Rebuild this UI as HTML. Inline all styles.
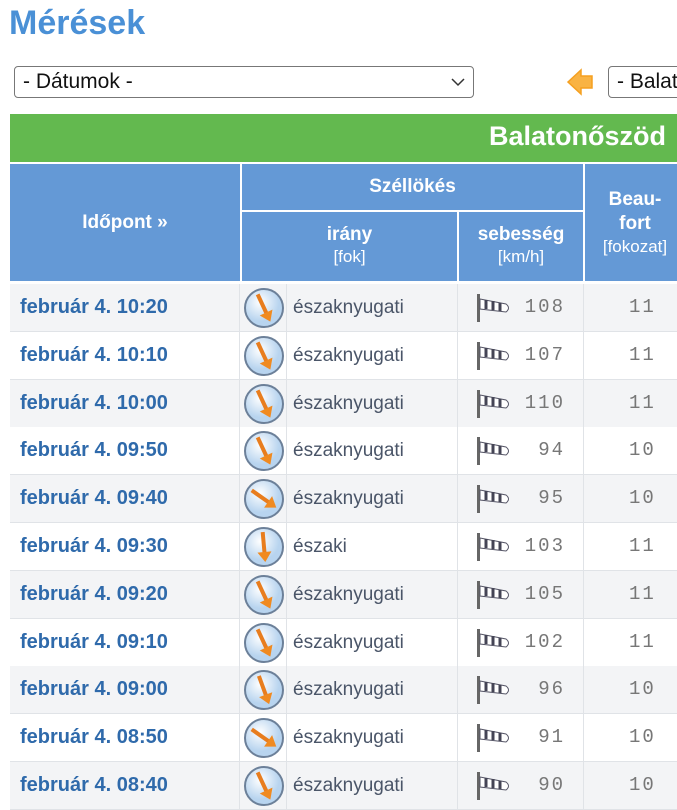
<!DOCTYPE html>
<html><head><meta charset="utf-8"><style>
body{margin:0;width:677px;height:768px;overflow:hidden;background:#fff;font-family:"Liberation Sans",sans-serif;position:relative}
h1{position:absolute;left:9px;top:4px;margin:0;font-size:34px;color:#4a90d6;font-weight:bold;letter-spacing:0px}
.sel{position:absolute;top:66px;height:32px;border:1px solid #777;border-radius:4px;box-sizing:border-box;font-size:21px;color:#111;line-height:30px;padding-left:8px;background:#fff}
.green{position:absolute;left:10px;top:114px;width:680px;height:48px;background:#63b94f}
.green span{position:absolute;right:24px;top:7px;color:#fff;font-weight:bold;font-size:27px}
.h{position:absolute;background:#6499d6;color:#fff;text-align:center;font-weight:bold;font-size:19px;box-sizing:border-box}
.h small{font-weight:normal;font-size:17px;display:block}
.row{position:absolute;left:10px;width:680px;height:47px;border-bottom:1px solid #e0e3e7}
.c{position:absolute;top:0;height:47px;border-right:1px solid #e0e3e7;box-sizing:border-box;line-height:47px}
.t{left:0;width:230px;color:#2f6aab;font-weight:bold;font-size:20px;padding-left:10px}
.i{left:230px;width:47px}
.d{left:277px;width:171px;color:#4a5568;font-size:19px;padding-left:6px}
.s{left:448px;width:126px;font-family:"Liberation Mono",monospace;color:#777;font-size:19px;text-align:right;padding-right:18px;letter-spacing:2px}
.b{left:574px;width:110px;font-family:"Liberation Mono",monospace;color:#777;font-size:19px;padding-left:45px;letter-spacing:2px}
.ic{position:absolute;left:3px;top:3px}
.sock{position:absolute;left:18px;top:10px}
</style></head><body>
<h1>Mérések</h1>
<div class="sel" style="left:14px;width:460px">- Dátumok -<svg style="position:absolute;right:8px;top:10px" width="14" height="10"><path d="M1 2 L7 8 L13 2" stroke="#333" fill="none" stroke-width="1.5"/></svg></div>
<svg style="position:absolute;left:566px;top:67px" width="30" height="30"><path d="M2 15 L15 3 L15 9 L26 9 L26 21 L15 21 L15 27 Z" fill="#f9b343" stroke="#f5a020" stroke-width="1.5"/></svg>
<div class="sel" style="left:608px;width:100px">- Balat</div>
<div class="green"><span>Balatonőszöd</span></div>
<div class="h" style="left:10px;top:164px;width:230px;height:117px;line-height:117px">Időpont »</div>
<div class="h" style="left:242px;top:164px;width:341px;height:46px;line-height:46px">Széllökés</div>
<div class="h" style="left:242px;top:212px;width:215px;height:69px;padding-top:12px;line-height:22px">irány<small>[fok]</small></div>
<div class="h" style="left:459px;top:212px;width:124px;height:69px;padding-top:12px;line-height:22px">sebesség<small>[km/h]</small></div>
<div class="h" style="left:585px;top:164px;width:100px;height:117px;padding-top:24px;line-height:24px">Beau-<br>fort<small style="line-height:22px">[fokozat]</small></div>
<div id="rows"></div>
<script>
var d=[["10:20","északnyugati",108,11,-25],["10:10","északnyugati",107,11,-25],["10:00","északnyugati",110,11,-25],["09:50","északnyugati",94,10,-25],["09:40","északnyugati",95,10,-55],["09:30","északi",103,11,-5],["09:20","északnyugati",105,11,-25],["09:10","északnyugati",102,11,-25],["09:00","északnyugati",96,10,-20],["08:50","északnyugati",91,10,-55],["08:40","északnyugati",90,10,-25]];
var h="";
d.forEach(function(r,k){var y=284+k*47.8;
h+='<div class="row" style="top:'+y+'px;background:'+(k%2?'#fff':'#f3f4f6')+'">'+
'<div class="c t">február 4. '+r[0]+'</div>'+
'<div class="c i"><svg class="ic" width="42" height="42" viewBox="0 0 42 42"><defs><radialGradient id="g'+k+'" cx="40%" cy="35%"><stop offset="0" stop-color="#fff"/><stop offset="1" stop-color="#b8d4ef"/></radialGradient></defs><circle cx="21" cy="21" r="19" fill="url(#g'+k+')" stroke="#6c8099" stroke-width="2"/><g transform="rotate('+r[4]+' 21 21)"><path d="M21 6 L21 28" stroke="#e87d1e" stroke-width="4"/><path d="M14 26 L28 26 L21 36 Z" fill="#f08a20"/></g></svg></div>'+
'<div class="c d">'+r[1]+'</div>'+
'<div class="c s"><svg class="sock" width="40" height="28"><rect x="1" y="0" width="3" height="28" fill="#666"/><path d="M4 5 L30 10 Q35 14 30 18 L4 15Z" fill="#fff" stroke="#556" stroke-width="1"/><path d="M10 6 L10 15 M17 7 L17 16 M24 9 L24 17" stroke="#445" stroke-width="3"/></svg>'+r[2]+'</div>'+
'<div class="c b">'+r[3]+'</div></div>';});
document.getElementById("rows").innerHTML=h;
</script>
</body></html>
